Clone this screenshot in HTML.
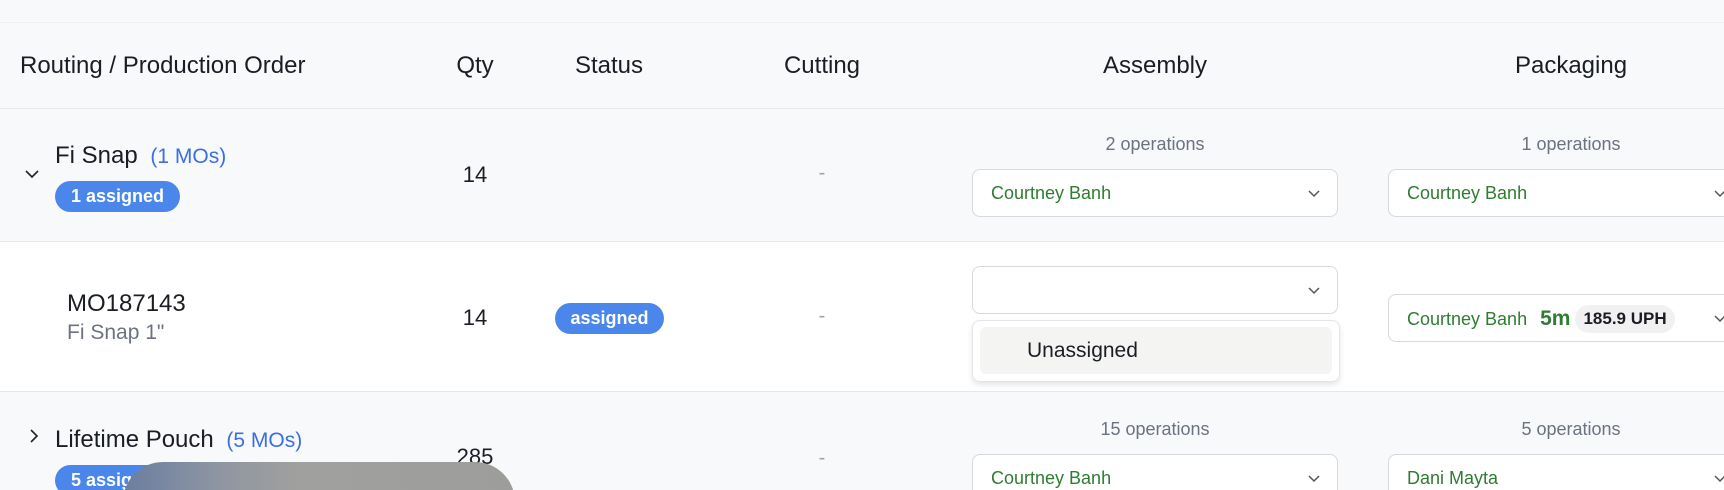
<!DOCTYPE html>
<html style="overflow:hidden;width:1724px;height:490px"><head><meta charset="utf-8"><style>
*{margin:0;padding:0;box-sizing:border-box}
body{width:1724px;height:490px;overflow:hidden;background:#f8f9fb;font-family:"Liberation Sans",sans-serif;color:#1a1d24;position:relative}
.a{position:absolute;white-space:nowrap}
.hd{font-size:24px;top:52px}
.c{transform:translateX(-50%)}
.line{position:absolute;left:0;width:1724px;height:1px;background:#e5e7eb}
.dd{position:absolute;background:#fff;border:1px solid #d6d9de;border-radius:8px;height:48px}
.dd .t{position:absolute;left:18px;top:13px;font-size:18px;color:#2e7d32}
.chev{position:absolute;right:16px;top:17px;width:14px;height:14px}
.ops{font-size:18px;color:#6b7280}
.badge{position:absolute;background:#4b87ea;color:#fff;font-weight:bold;font-size:18px;border-radius:16px;height:31px;line-height:31px;padding:0 16px}
.dash{color:#9ca3af;font-size:20px}
</style></head><body>
<div class="line" style="top:22px;background:#eef0f3"></div>
<div class="a hd" style="left:20px">Routing / Production Order</div>
<div class="a hd c" style="left:475px">Qty</div>
<div class="a hd c" style="left:609px">Status</div>
<div class="a hd c" style="left:822px">Cutting</div>
<div class="a hd c" style="left:1155px">Assembly</div>
<div class="a hd c" style="left:1571px">Packaging</div>
<div class="line" style="top:108px"></div>

<!-- row1 -->
<svg class="a" style="left:24px;top:168px" width="16" height="12" viewBox="0 0 16 12"><path d="M2 3l6 6 6-6" fill="none" stroke="#222" stroke-width="1.6"/></svg>
<div class="a" style="left:55px;top:142px;font-size:24px">Fi Snap <span style="color:#3b6fe0;font-size:21px;margin-left:6px">(1 MOs)</span></div>
<div class="badge" style="left:55px;top:181px">1 assigned</div>
<div class="a c" style="left:475px;top:162px;font-size:22px">14</div>
<div class="a c dash" style="left:822px;top:162px">-</div>
<div class="a c ops" style="left:1155px;top:134px">2 operations</div>
<div class="dd" style="left:972px;top:169px;width:366px"><div class="t">Courtney Banh</div><svg class="chev" viewBox="0 0 14 14"><path d="M2 4l5 5 5-5" fill="none" stroke="#555" stroke-width="1.5"/></svg></div>
<div class="a c ops" style="left:1571px;top:134px">1 operations</div>
<div class="dd" style="left:1388px;top:169px;width:360px"><div class="t">Courtney Banh</div><svg class="chev" style="right:20px" viewBox="0 0 14 14"><path d="M2 4l5 5 5-5" fill="none" stroke="#555" stroke-width="1.5"/></svg></div>
<div class="line" style="top:241px"></div>

<!-- row2 -->
<div class="a" style="left:0;top:242px;width:1724px;height:149px;background:#fff"></div>
<div class="a" style="left:67px;top:290px;font-size:24px">MO187143</div>
<div class="a" style="left:67px;top:321px;font-size:21px;color:#6b7280">Fi Snap 1"</div>
<div class="a c" style="left:475px;top:305px;font-size:22px">14</div>
<div class="badge" style="left:555px;top:303px;width:109px;text-align:center;padding:0">assigned</div>
<div class="a c dash" style="left:822px;top:305px">-</div>
<div class="dd" style="left:972px;top:266px;width:366px"><svg class="chev" viewBox="0 0 14 14"><path d="M2 4l5 5 5-5" fill="none" stroke="#555" stroke-width="1.5"/></svg></div>
<div class="a" style="left:972px;top:320px;width:368px;height:62px;background:#fff;border:1px solid #e3e5e8;border-radius:8px;box-shadow:0 3px 6px rgba(0,0,0,.1)"><div style="position:absolute;left:7px;top:6px;right:7px;height:47px;background:#f4f4f3;border-radius:6px;font-size:21px;line-height:47px;padding-left:47px;color:#1a1d24">Unassigned</div></div>
<div class="dd" style="left:1388px;top:294px;width:360px"><div class="t" style="top:10px">Courtney Banh <b style="font-size:21px;margin-left:8px">5m</b> <span style="display:inline-block;background:#f1f1f1;color:#1a1d24;font-weight:bold;font-size:17px;border-radius:14px;padding:4px 8px;vertical-align:1px">185.9 UPH</span></div><svg class="chev" style="right:20px" viewBox="0 0 14 14"><path d="M2 4l5 5 5-5" fill="none" stroke="#555" stroke-width="1.5"/></svg></div>
<div class="line" style="top:391px"></div>

<!-- row3 -->
<svg class="a" style="left:28px;top:428px" width="12" height="16" viewBox="0 0 12 16"><path d="M3 2l6 6-6 6" fill="none" stroke="#222" stroke-width="1.6"/></svg>
<div class="a" style="left:55px;top:426px;font-size:24px">Lifetime Pouch <span style="color:#3b6fe0;font-size:21px;margin-left:6px">(5 MOs)</span></div>
<div class="badge" style="left:55px;top:465px">5 assigned</div>
<div class="a c" style="left:475px;top:444px;font-size:22px">285</div>
<div class="a c dash" style="left:822px;top:447px">-</div>
<div class="a c ops" style="left:1155px;top:419px">15 operations</div>
<div class="dd" style="left:972px;top:454px;width:366px"><div class="t">Courtney Banh</div><svg class="chev" viewBox="0 0 14 14"><path d="M2 4l5 5 5-5" fill="none" stroke="#555" stroke-width="1.5"/></svg></div>
<div class="a c ops" style="left:1571px;top:419px">5 operations</div>
<div class="dd" style="left:1388px;top:454px;width:360px"><div class="t">Dani Mayta</div><svg class="chev" style="right:20px" viewBox="0 0 14 14"><path d="M2 4l5 5 5-5" fill="none" stroke="#555" stroke-width="1.5"/></svg></div>

<div class="a" style="left:123px;top:462px;width:392px;height:40px;border-radius:42px 42px 0 0;background:linear-gradient(90deg,#6a7ea0 0%,#8f96a2 25%,#a0a09e 45%,#9d9d9b 100%)"></div>
</body></html>
